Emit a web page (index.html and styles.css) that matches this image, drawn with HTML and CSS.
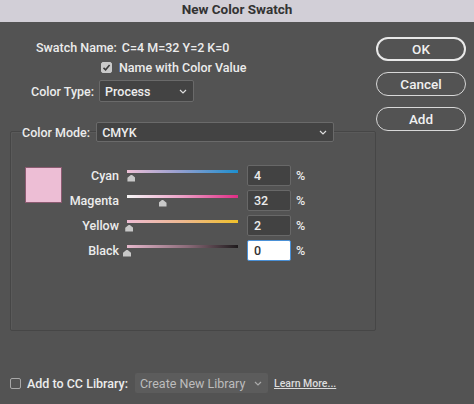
FILE: index.html
```html
<!DOCTYPE html>
<html lang="en">
<head>
  <meta charset="UTF-8">
  <title>New Color Swatch</title>
  <link rel="stylesheet" href="styles.css">
</head>
<body>

  <div class="titlebar">New Color Swatch</div>

  <div class="dialog">
    <div class="left">
      <div class="row row-name">
        <span class="label">Swatch Name:</span>
        <span class="value">C=4 M=32 Y=2 K=0</span>
      </div>
      <div class="row row-check">
        <span class="check checked">
          <svg width="9" height="9" viewBox="0 0 9 9"><path d="M1.5 4.8 L3.6 6.8 L7.6 2" fill="none" stroke="#3a3a3a" stroke-width="1.6"/></svg>
        </span>
        <span>Name with Color Value</span>
      </div>
      <div class="row row-type">
        <span class="label">Color Type:</span>
        <div class="select select-type">
          <span>Process</span>
          <svg class="chev" width="8" height="5" viewBox="0 0 8 5"><path d="M1 1 L4 4 L7 1" fill="none" stroke="#ddd" stroke-width="1.2"/></svg>
        </div>
      </div>

      <div class="group">
        <div class="group-head">
          <span class="label">Color Mode:</span>
          <div class="select select-mode">
            <span>CMYK</span>
            <svg class="chev" width="8" height="5" viewBox="0 0 8 5"><path d="M1 1 L4 4 L7 1" fill="none" stroke="#ddd" stroke-width="1.2"/></svg>
          </div>
        </div>

        <div class="group-body">
          <div class="swatch"></div>
          <div class="sliders">
            <div class="slider-row">
              <span class="slider-label">Cyan</span>
              <div class="slider">
                <div class="track track-cyan"></div>
                <span class="thumb" style="margin-left: calc(4% - 4px)"></span>
              </div>
              <div class="num">4</div>
              <span class="pct">%</span>
            </div>
            <div class="slider-row">
              <span class="slider-label">Magenta</span>
              <div class="slider">
                <div class="track track-magenta"></div>
                <span class="thumb" style="margin-left: calc(32% - 4px)"></span>
              </div>
              <div class="num">32</div>
              <span class="pct">%</span>
            </div>
            <div class="slider-row">
              <span class="slider-label">Yellow</span>
              <div class="slider">
                <div class="track track-yellow"></div>
                <span class="thumb" style="margin-left: calc(2% - 4px)"></span>
              </div>
              <div class="num">2</div>
              <span class="pct">%</span>
            </div>
            <div class="slider-row">
              <span class="slider-label">Black</span>
              <div class="slider">
                <div class="track track-black"></div>
                <span class="thumb" style="margin-left: calc(0% - 4px)"></span>
              </div>
              <div class="num num-active">0</div>
              <span class="pct">%</span>
            </div>
          </div>
        </div>
      </div>
    </div>

    <div class="buttons">
      <button class="btn btn-default">OK</button>
      <button class="btn">Cancel</button>
      <button class="btn">Add</button>
    </div>
  </div>

  <div class="footer">
    <span class="check"></span>
    <span class="footer-label">Add to CC Library:</span>
    <div class="select select-lib">
      <span>Create New Library</span>
      <svg class="chev" width="8" height="5" viewBox="0 0 8 5"><path d="M1 1 L4 4 L7 1" fill="none" stroke="#aaa" stroke-width="1.2"/></svg>
    </div>
    <a class="learn" href="#">Learn More...</a>
  </div>

</body>
</html>
```

FILE: styles.css
```css
body {
  margin: 0;
  width: 474px;
  height: 404px;
  overflow: hidden;
  background-color: #535353;
  font-family: Roboto, "Liberation Sans", sans-serif;
  font-size: 12.5px;
  font-weight: 500;
  color: #ececec;
}

.titlebar {
  height: 22px;
  line-height: 19px;
  background-color: #d2cfd7;
  color: #333;
  font-weight: bold;
  font-size: 13.5px;
  text-align: center;
}

.dialog {
  display: flex;
}

.left {
  width: 366px;
  padding-left: 10px;
}

.row {
  display: flex;
  align-items: center;
}

.row-name {
  margin-top: 16px;
  height: 18px;
  padding-left: 26px;
  gap: 5px;
}

.row-check {
  margin-top: 2px;
  height: 18px;
  padding-left: 91px;
  gap: 7px;
}

.row-type {
  margin-top: 4px;
  height: 22px;
  padding-left: 21px;
  gap: 5px;
}

.check {
  display: flex;
  align-items: center;
  justify-content: center;
  box-sizing: border-box;
  width: 11px;
  height: 11px;
  border: 1px solid #a8a8a8;
  border-radius: 2px;
}

.check.checked {
  background-color: #c9c9c9;
  border-color: #c9c9c9;
}

.select {
  display: flex;
  align-items: center;
  justify-content: space-between;
  box-sizing: border-box;
  padding: 0 6px 0 5px;
  background-color: #434343;
  border: 1px solid #6a6a6a;
  border-radius: 2px;
  color: #ededed;
}

.select-type {
  width: 95px;
  height: 22px;
}

.chev {
  flex-shrink: 0;
}

/* color mode group */
.group {
  margin-top: 29px;
  height: 198px;
  border: 1px solid #464646;
  box-shadow: inset 1px 1px 0 #5a5a5a;
  border-radius: 2px;
}

.group-head {
  display: flex;
  align-items: center;
  gap: 6px;
  height: 20px;
  margin-top: -10px;
  padding-left: 11px;
}

.select-mode {
  width: 238px;
  height: 20px;
}

.group-body {
  display: flex;
  padding-left: 14px;
  margin-top: 21px;
}

.swatch {
  box-sizing: border-box;
  width: 37px;
  height: 36px;
  background-color: #edbed5;
  border: 1px solid #8a5a70;
  margin-top: 4px;
}

.sliders {
  display: flex;
  flex-direction: column;
}

.slider-row {
  display: flex;
  align-items: center;
  height: 25px;
}

.slider-label {
  width: 57px;
  text-align: right;
}

.slider {
  width: 111px;
  margin-left: 8px;
  height: 18px;
  padding-top: 3px;
  box-sizing: border-box;
}

.track {
  height: 3px;
}

.track-cyan {
  background: linear-gradient(to right, #eec0d6, #9aa0d0 45%, #1d8fcf);
}

.track-magenta {
  background: linear-gradient(to right, #f6f6f6, #eca0c6 50%, #e02e86);
}

.track-yellow {
  background: linear-gradient(to right, #eebcd3, #eeb890 50%, #f0c02a);
}

.track-black {
  background: linear-gradient(to right, #e6b8cc, #8a6a78 55%, #1e1a1c);
}

.thumb {
  display: block;
  width: 8px;
  height: 7px;
  margin-top: 2px;
  background-color: #c8c8c8;
  clip-path: polygon(50% 0, 100% 45%, 100% 100%, 0 100%, 0 45%);
}

.num {
  box-sizing: border-box;
  width: 44px;
  height: 21px;
  margin-left: 9px;
  padding-left: 6px;
  line-height: 19px;
  background-color: #424242;
  border: 1px solid #686868;
  border-radius: 2px;
}

.num-active {
  background-color: #fff;
  color: #333;
  border: 1px solid #4a90d6;
}

.pct {
  margin-left: 5px;
}

/* right side buttons */
.buttons {
  display: flex;
  flex-direction: column;
  gap: 11px;
  margin-top: 15px;
}

.btn {
  width: 90px;
  height: 24px;
  background: transparent;
  border: 1px solid #d8d8d8;
  border-radius: 12px;
  color: #f0f0f0;
  font-family: Roboto, "Liberation Sans", sans-serif;
  font-size: 13.5px;
  font-weight: 500;
  cursor: pointer;
}

.btn-default {
  border: 2px solid #e8e8e8;
}

/* bottom bar */
.footer {
  display: flex;
  align-items: center;
  height: 20px;
  margin-top: 42px;
  padding-left: 10px;
}

.footer-label {
  margin-left: 6px;
}

.select-lib {
  width: 133px;
  height: 20px;
  margin-left: 7px;
  background-color: #5c5c5c;
  border: none;
  color: #bdbdbd;
  font-weight: 400;
}

.learn {
  margin-left: 6px;
  color: #dcdcdc;
  font-size: 10.5px;
}
```
